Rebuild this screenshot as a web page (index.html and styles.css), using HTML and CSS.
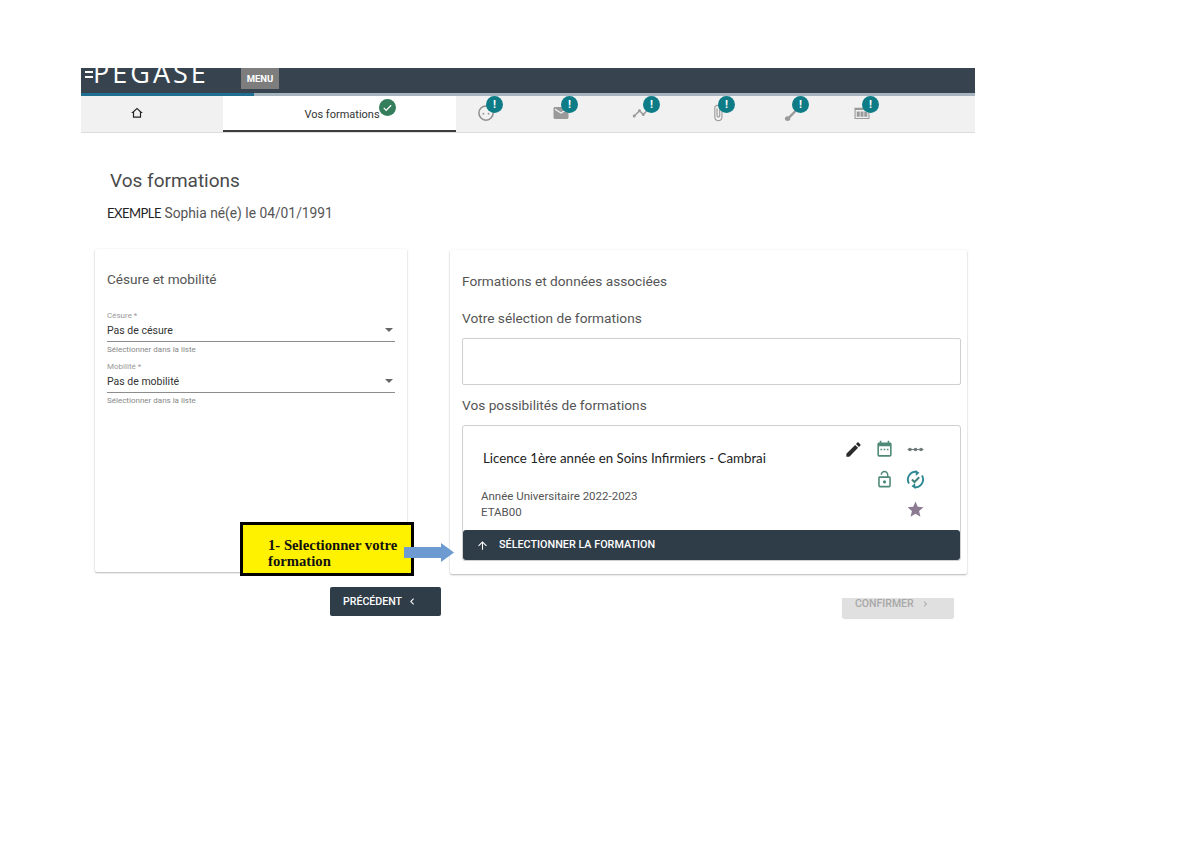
FILE: index.html
```html
<!DOCTYPE html>
<html lang="fr">
<head>
<meta charset="utf-8">
<title>Vos formations</title>
<link rel="stylesheet" href="styles.css">
</head>
<body>
<div class="page">
  <header class="topbar">
    <div class="logo">PEGASE</div>
    <div class="menu">MENU</div>
    <div class="progress"></div>
  </header>
  <nav class="tabs">
    <div class="tab-home">
      <svg class="ic-home" viewBox="0 0 24 24"><path d="M12 5.700l5 4.500V18H7v-7.800l5-4.500M12 3L2 12h3v8h14v-8h3L12 3z"/></svg>
    </div>
    <div class="tab-active">
      <span>Vos formations</span>
      <span class="badge badge-ok"><svg viewBox="0 0 24 24"><path d="M9 16.200L4.800 12l-1.900 1.900L9 20 21 8l-1.900-1.900z"/></svg></span>
    </div>
    <div class="tab-icons">
      <div class="tab-icon">
        <svg viewBox="0 0 24 24"><circle cx="12" cy="12" r="9.500" fill="none" stroke="#8c8c8c" stroke-width="2"/><circle cx="8.500" cy="13" r="1.300"/><circle cx="15.500" cy="13" r="1.300"/></svg>
        <span class="badge">!</span>
      </div>
      <div class="tab-icon">
        <svg viewBox="0 0 24 24"><path d="M20 4H4c-1.100 0-2 .9-2 2v12c0 1.100.9 2 2 2h16c1.100 0 2-.9 2-2V6c0-1.100-.9-2-2-2zm0 4l-8 5-8-5V6l8 5 8-5v2z"/></svg>
        <span class="badge">!</span>
      </div>
      <div class="tab-icon">
        <svg viewBox="0 0 24 24"><path d="M23 8c0 1.100-.9 2-2 2-.18 0-.35-.02-.51-.07l-3.560 3.550c.05.16.07.34.07.52 0 1.100-.9 2-2 2s-2-.9-2-2c0-.18.02-.36.07-.52l-2.550-2.550c-.16.05-.34.07-.52.07s-.36-.02-.52-.07l-4.550 4.560c.05.16.07.33.07.51 0 1.100-.9 2-2 2s-2-.9-2-2 .9-2 2-2c.18 0 .35.02.51.07l4.560-4.550C8.020 9.360 8 9.180 8 9c0-1.100.9-2 2-2s2 .9 2 2c0 .18-.02.36-.07.52l2.550 2.550c.16-.05.34-.07.52-.07s.36.02.52.07l3.550-3.560C19.020 8.350 19 8.180 19 8c0-1.100.9-2 2-2s2 .9 2 2z"/></svg>
        <span class="badge badge-far">!</span>
      </div>
      <div class="tab-icon">
        <svg viewBox="0 0 24 24"><path d="M16.500 6v11.500c0 2.210-1.790 4-4 4s-4-1.790-4-4V5c0-1.380 1.120-2.500 2.500-2.500s2.500 1.120 2.500 2.500v10.500c0 .55-.45 1-1 1s-1-.45-1-1V6H10v9.500c0 1.380 1.120 2.500 2.500 2.500s2.500-1.120 2.500-2.500V5c0-2.210-1.790-4-4-4S7 2.790 7 5v12.500c0 3.040 2.460 5.500 5.500 5.500s5.500-2.460 5.500-5.500V6h-1.500z"/></svg>
        <span class="badge">!</span>
      </div>
      <div class="tab-icon">
        <svg viewBox="0 0 24 24"><path d="M2.500 19.500c0-1.800 1.400-3.200 3.200-3.200.5 0 1 .1 1.400.3L19 5l2 2L9.400 18.900c.2.500.3.900.3 1.400-.3 1.500-1.700 2.200-3.500 2.200-2.200 0-3.700-1.300-3.700-3z"/></svg>
        <span class="badge">!</span>
      </div>
      <div class="tab-icon">
        <svg viewBox="0 0 24 24"><path d="M2 5h20v15H2zM3.500 8v10.500h17V8z" fill-rule="evenodd"/><path d="M5 10h4v7H5zM10 10h4v7h-4zM15 10h4v7h-4z"/></svg>
        <span class="badge">!</span>
      </div>
    </div>
  </nav>

  <main class="content">
    <h1 class="title">Vos formations</h1>
    <p class="identity"><span class="surname">EXEMPLE</span> Sophia né(e) le 04/01/1991</p>

    <div class="columns">
      <section class="card card-left">
        <h2 class="card-title">Césure et mobilité</h2>
        <div class="field">
          <div class="field-label">Césure *</div>
          <div class="field-value"><span>Pas de césure</span><i class="caret"></i></div>
          <div class="field-hint">Sélectionner dans la liste</div>
        </div>
        <div class="field">
          <div class="field-label">Mobilité *</div>
          <div class="field-value"><span>Pas de mobilité</span><i class="caret"></i></div>
          <div class="field-hint">Sélectionner dans la liste</div>
        </div>
      </section>

      <section class="card card-right">
        <h2 class="section-head">Formations et données associées</h2>
        <h3 class="section-sub">Votre sélection de formations</h3>
        <div class="selection-box"></div>
        <h3 class="section-sub section-sub-2">Vos possibilités de formations</h3>
        <article class="formation">
          <div class="formation-body">
            <div class="formation-text">
              <div class="formation-name">Licence 1ère année en Soins Infirmiers - Cambrai</div>
              <div class="formation-meta">Année Universitaire 2022-2023<br>ETAB00</div>
            </div>
            <div class="formation-icons">
              <svg class="fi-dark" viewBox="0 0 24 24"><path d="M3 17.250V21h3.750L17.810 9.940l-3.750-3.750L3 17.250zM20.710 7.040c.39-.39.39-1.020 0-1.410l-2.340-2.340c-.39-.39-1.020-.39-1.410 0l-1.830 1.830 3.750 3.750 1.830-1.830z"/></svg>
              <svg class="fi-green" viewBox="0 0 24 24"><path fill-rule="evenodd" d="M19 3h-1V1h-2v2H8V1H6v2H5c-1.100 0-2 .9-2 2v14c0 1.100.9 2 2 2h14c1.100 0 2-.9 2-2V5c0-1.100-.9-2-2-2zm0 16H5V8h14v11z"/><path d="M7 11h2v2H7zM11 11h2v2h-2zM15 11h2v2h-2z"/></svg>
              <svg class="fi-gray" viewBox="0 0 24 24"><path d="M2 11.300h20v1.400H2z"/><circle cx="5" cy="12" r="2.300"/><circle cx="12" cy="12" r="2.300"/><circle cx="19" cy="12" r="2.300"/></svg>
              <svg class="fi-green fi-col2" viewBox="0 0 24 24"><path d="M12 17c1.100 0 2-.9 2-2s-.9-2-2-2-2 .9-2 2 .9 2 2 2zm6-9h-1V6c0-2.760-2.240-5-5-5S7 3.240 7 6h1.900c0-1.710 1.390-3.100 3.100-3.100 1.710 0 3.100 1.390 3.100 3.100v2H6c-1.100 0-2 .9-2 2v10c0 1.100.9 2 2 2h12c1.100 0 2-.9 2-2V10c0-1.100-.9-2-2-2zm0 12H6V10h12v10z"/></svg>
              <svg class="fi-teal" viewBox="0 0 24 24"><path d="M3.800 17A9.800 9.800 0 0 1 13.500 2.300M20.200 7A9.800 9.800 0 0 1 10.500 21.700" fill="none" stroke="#2f8a95" stroke-width="2.400"/><path d="M12 0l5 3.500-4.500 4zM12 24l-5-3.500 4.500-4z"/><path d="M7.500 12l3.200 3.200 6-6" fill="none" stroke="#3d7f78" stroke-width="2.400"/></svg>
              <svg class="fi-star fi-col3" viewBox="0 0 24 24"><path d="M12 17.270L18.180 21l-1.640-7.030L22 9.240l-7.190-.61L12 2 9.190 8.630 2 9.240l5.460 4.730L5.820 21z"/></svg>
            </div>
          </div>
          <div class="select-btn">
            <svg viewBox="0 0 24 24"><path d="M4 12l1.410 1.410L11 7.830V20h2V7.830l5.580 5.590L20 12l-8-8-8 8z"/></svg>
            <span>SÉLECTIONNER LA FORMATION</span>
          </div>
        </article>
      </section>
    </div>

    <div class="actions">
      <div class="btn-prev">PRÉCÉDENT <svg viewBox="0 0 24 24"><path d="M16 5.500L14 3.500 5.500 12l8.500 8.500 2-2L9.500 12z"/></svg></div>
      <div class="btn-confirm">CONFIRMER <svg viewBox="0 0 24 24"><path d="M8 5.500l2-2 8.500 8.500-8.500 8.500-2-2 6.500-6.500z"/></svg></div>
    </div>

    <div class="callout">1- Selectionner votre<br>formation</div>
    <svg class="callout-arrow" viewBox="0 0 50 19"><path d="M0 4h37V0l13 9.500-13 9.500v-4H0z"/></svg>
  </main>
</div>
</body>
</html>
```

FILE: styles.css
```css
* { box-sizing: border-box; }
html, body { margin: 0; padding: 0; background: #fff; }
body { font-family: Roboto, "Liberation Sans", sans-serif; color: #4a4a4a; width: 1200px; height: 848px; overflow: hidden; }
.page { width: 894px; margin: 68px 0 0 81px; }

.topbar { position: relative; height: 28px; background: #37444f; display: flex; align-items: flex-start; overflow: hidden; }
.logo { position: relative; width: 160px; height: 20px; padding-left: 12px; color: #fff; font: 500 27px/10px "Open Sans", sans-serif; letter-spacing: 3px; }
.logo::before { content: ""; position: absolute; left: 4px; top: 3px; width: 8px; height: 2px; background: #fff; box-shadow: 0 5px 0 #fff; }
.menu { width: 38px; height: 21px; color: #fff; background: #7d7d7d; font: 700 9.500px/21px Roboto, sans-serif; text-align: center; }
.progress { position: absolute; left: 0; right: 0; bottom: 0; height: 3px; background: linear-gradient(90deg, #1f6f93 0 173px, #a6b4bd 173px); }

.tabs { display: flex; height: 37px; background: #f1f1f1; border-bottom: 1px solid #dcdcdc; }
.tab-home { width: 142px; display: flex; align-items: center; justify-content: center; padding: 0 30px 3px 0; }
.ic-home { width: 14px; height: 14px; fill: #222; }
.tab-active { position: relative; width: 233px; background: #fff; border-bottom: 2px solid #3c3c3c; font-size: 11px; color: #333; display: flex; justify-content: center; align-items: center; padding: 3px 0 0 5px; }
.tab-icons { display: flex; }
.tab-icon { position: relative; width: 18px; height: 18px; margin: 8px 0 0 57px; }
.tab-icon:nth-child(1) { margin-left: 21px; }
.tab-icon:nth-child(3) { margin-left: 62px; }
.tab-icon:nth-child(4) { margin-left: 59px; }
.tab-icon:nth-child(5) { margin-left: 56px; }
.tab-icon:nth-child(6) { margin-left: 52px; }
.tab-icon svg { display: block; width: 18px; height: 18px; fill: #9a9a9a; }
.badge { position: absolute; top: -8px; left: 0; margin-left: 9px; width: 17px; height: 17px; border-radius: 50%; background: #0e7c86; color: #fff; font: 700 11px/17px Roboto, sans-serif; text-align: center; }
.badge-far { margin-left: 11px; }
.badge-ok { background: #357e5c; left: auto; top: 3px; right: 60px; margin: 0; display: flex; align-items: center; justify-content: center; }
.badge-ok svg { width: 11px; height: 11px; fill: #fff; }

.content { position: relative; }
.title { margin: 0; padding: 36px 0 0 29px; font: 400 19px/24px Roboto, sans-serif; color: #4a4a4a; }
.identity { margin: 0; padding: 11px 0 0 26px; font: 400 13.800px/18px Roboto, sans-serif; color: #555; }
.surname { font-family: Lato, sans-serif; color: #222; font-size: 13px; letter-spacing: -.5px; }

.columns { display: flex; align-items: flex-start; gap: 43px; margin: 27px 0 0 14px; }
.card { background: #fff; box-shadow: 0 1px 2px rgba(0,0,0,.28), 0 0 3px rgba(0,0,0,.04); border-radius: 2px; }
.card-left { width: 312px; height: 323px; padding: 20px 12px 0; }
.card-right { width: 517px; height: 324px; padding: 22px 6px 0 12px; margin-top: 1px; }
.card-title { margin: 0 0 22px; font: 400 13.600px/20px Roboto, sans-serif; color: #555; }
.field { margin-bottom: 7px; }
.field-label { font-size: 8px; line-height: 10px; color: #999; }
.field-value { display: flex; justify-content: space-between; align-items: center; height: 21px; border-bottom: 1px solid #8d8d8d; font-size: 10.500px; color: #333; padding-bottom: 2px; }
.caret { width: 0; height: 0; margin-right: 2px; border: 4px solid transparent; border-top: 4px solid #666; border-bottom: 0; }
.field-hint { margin-top: 3px; font-size: 8px; line-height: 10px; color: #888; }

.section-head { margin: 0; font: 400 13.700px/18px Roboto, sans-serif; color: #555; }
.section-sub { margin: 19px 0 0; font: 400 13.700px/18px Roboto, sans-serif; color: #555; }
.section-sub-2 { margin-top: 11px; }
.selection-box { height: 47px; margin-top: 11px; border: 1px solid #cfcfcf; border-radius: 2px; }

.formation { margin-top: 11px; height: 136px; border: 1px solid #cfcfcf; border-radius: 3px; display: flex; flex-direction: column; }
.formation-body { flex: 1; display: flex; justify-content: space-between; padding: 14px 35px 0 18px; }
.formation-name { padding: 9px 0 0 2px; font: 400 13.270px/18px Lato, sans-serif; color: #222; }
.formation-meta { margin-top: 21px; font-size: 11.500px; line-height: 16px; color: #555; }
.formation-icons { display: grid; grid-template-columns: repeat(3, 19px); grid-auto-rows: 19px; column-gap: 12px; row-gap: 11px; }
.formation-icons svg { width: 19px; height: 19px; }
.fi-col2 { grid-column: 2; }
.fi-col3 { grid-column: 3; }
.fi-dark { fill: #2b2b2b; }
.fi-green { fill: #4f8a78; }
.fi-gray { fill: #6f7a7a; }
.fi-teal { fill: #2f8a95; }
.fi-star { fill: #8b7a92; }
.select-btn { height: 30px; background: #2f3d49; border-radius: 3px; color: #fff; display: flex; align-items: center; padding-left: 13px; gap: 10px; font: 500 10.800px/30px Roboto, sans-serif; }
.select-btn svg { width: 13px; height: 13px; fill: #fff; }

.actions { display: flex; align-items: flex-start; margin: 13px 0 0 249px; }
.btn-prev { width: 111px; height: 29px; background: #2f3d49; border-radius: 2px; color: #fff; font: 500 10.600px/29px Roboto, sans-serif; padding-left: 13px; display: flex; align-items: center; gap: 6px; }
.btn-prev svg { width: 9px; height: 9px; fill: #fff; }
.btn-confirm { width: 112px; height: 20px; margin: 11px 0 0 401px; background: #e0e0e0; border-radius: 0 0 3px 3px; box-shadow: 0 1px 1px rgba(0,0,0,.15); color: #a8a8a8; font: 500 10.500px/11px Roboto, sans-serif; padding-left: 13px; display: flex; align-items: flex-start; gap: 7px; }
.btn-confirm svg { width: 8px; height: 8px; margin-top: 2px; fill: #a8a8a8; }

.callout { position: absolute; left: 159px; top: 389px; width: 174px; height: 54px; padding: 12px 0 0 25px; background: #fff200; border: 3px solid #000; font: 700 14.700px/16px "Liberation Serif", serif; color: #111; }
.callout-arrow { position: absolute; left: 323px; top: 410px; width: 50px; height: 19px; fill: #6d9bd1; }
```
